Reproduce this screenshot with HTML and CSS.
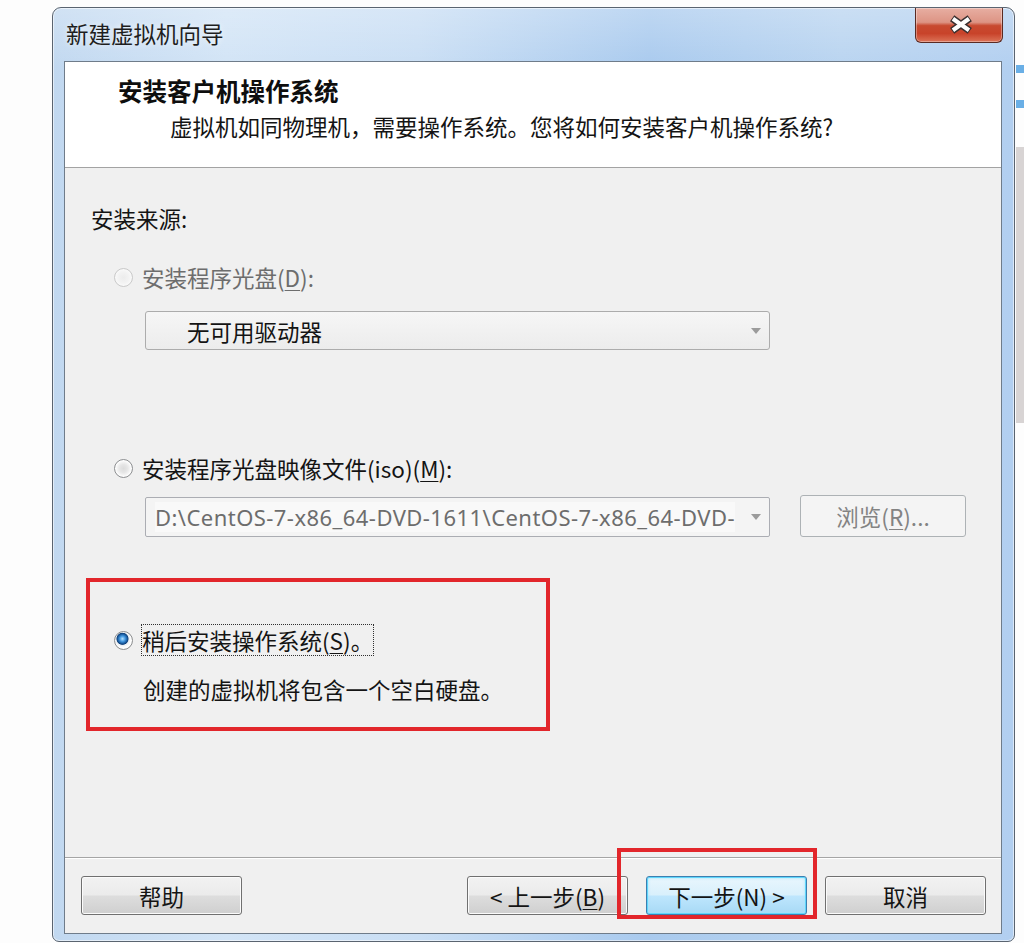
FILE: index.html
```html
<!DOCTYPE html>
<html lang="zh-CN">
<head>
<meta charset="utf-8">
<title>新建虚拟机向导</title>
<link rel="stylesheet" href="styles.css">
</head>
<body>
<div class="page">
  <div class="window">
    <div class="titlebar">
      <div class="title">新建虚拟机向导</div>
      <div class="close-btn">
        <svg width="88" height="35" viewBox="0 0 88 35">
          <path d="M37 10 L55 23 M55 10 L37 23" stroke="#3a3030" stroke-width="7.5" fill="none"/>
          <path d="M37.8 10.6 L54.2 22.4 M54.2 10.6 L37.8 22.4" stroke="#ffffff" stroke-width="4.2" fill="none"/>
        </svg>
      </div>
    </div>
    <div class="panel">
      <div class="header">
        <div class="h-title">安装客户机操作系统</div>
        <div class="h-sub">虚拟机如同物理机，需要操作系统。您将如何安装客户机操作系统?</div>
      </div>
      <div class="content">
        <div class="source-label">安装来源:</div>
        <div class="radio-row disabled">
          <span class="radio radio-disabled"></span>
          <span class="label">安装程序光盘(<u>D</u>):</span>
        </div>
        <div class="combo combo-list">
          <span class="combo-text">无可用驱动器</span>
          <span class="arrow"></span>
        </div>
        <div class="radio-row second">
          <span class="radio"></span>
          <span class="label">安装程序光盘映像文件(iso)(<u>M</u>):</span>
        </div>
        <div class="iso-row">
          <div class="combo combo-edit">
            <span class="combo-path">D:\CentOS-7-x86_64-DVD-1611\CentOS-7-x86_64-DVD-</span>
            <span class="arrow"></span>
          </div>
          <div class="btn btn-disabled">浏览(<u>R</u>)...</div>
        </div>
        <div class="highlight">
          <div class="radio-row">
            <span class="radio radio-checked"></span>
            <span class="label focus">稍后安装操作系统(<u>S</u>)。</span>
          </div>
          <div class="desc">创建的虚拟机将包含一个空白硬盘。</div>
        </div>
      </div>
      <div class="footer">
        <div class="btn help">帮助</div>
        <div class="btn">&lt; 上一步(<u>B</u>)</div>
        <div class="btn btn-default">下一步(N) &gt;</div>
        <div class="btn">取消</div>
      </div>
      <div class="annot-next"></div>
    </div>
  </div>
  <div class="side">
    <div class="mark mark-1"></div>
    <div class="mark mark-2"></div>
    <div class="side-bar"></div>
  </div>
</div>
</body>
</html>
```
FILE: styles.css
```css
* { box-sizing: border-box; }
html, body { margin: 0; padding: 0; }
body {
  width: 1024px;
  height: 943px;
  overflow: hidden;
  background: #fdfdfd;
  font-family: "Noto Sans CJK SC", "Noto Sans", sans-serif;
  color: #141414;
}
u { text-decoration-thickness: 1px; text-underline-offset: 3px; }

.page {
  display: flex;
  align-items: flex-start;
  padding: 7px 0 0 52px;
}

.window {
  width: 963px;
  height: 935px;
  border: 1px solid #5a6470;
  border-radius: 9px 9px 7px 7px;
  background:
    linear-gradient(to bottom, rgba(255,255,255,0.25), rgba(255,255,255,0) 60px),
    linear-gradient(to right, #c1d8f0 0%, #d2e4f6 18%, #c9def4 38%, #a9caee 62%, #b9d4f0 82%, #b2cff0 100%);
  box-shadow: inset 0 0 0 1px rgba(255,255,255,0.55);
  padding: 0 12px 7px 11px;
  display: flex;
  flex-direction: column;
}

.titlebar {
  height: 53px;
  display: flex;
  justify-content: space-between;
  align-items: flex-start;
}
.title {
  margin-top: 12px;
  padding-left: 2px;
  font-size: 22.5px;
  line-height: 26px;
  color: #1e1e1e;
  text-shadow: 0 0 6px rgba(255,255,255,0.8);
}
.close-btn {
  width: 88px;
  height: 35px;
  margin-right: -1px;
  border: 1px solid #5a2a22;
  border-top: none;
  border-radius: 0 0 6px 6px;
  background: linear-gradient(to bottom, #e7aea2 0%, #dd9484 42%, #c84a30 52%, #c8432a 75%, #dc7358 100%);
  box-shadow: inset 0 0 0 1px rgba(255,255,255,0.35);
  display: flex;
}

.panel {
  flex: 1;
  position: relative;
  border: 1px solid #6f7c8a;
  background: #f0f0f0;
  display: flex;
  flex-direction: column;
}

.header {
  height: 106px;
  background: #ffffff;
  border-bottom: 1px solid #a3a3a3;
  padding: 14px 0 0 53px;
}
.h-title {
  font-size: 24.5px;
  line-height: 30px;
  font-weight: 700;
  color: #0e0e0e;
}
.h-sub {
  margin-top: 5px;
  padding-left: 52px;
  font-size: 22.5px;
  line-height: 30px;
}

.content {
  flex: 1;
  padding-top: 35px;
  display: flex;
  flex-direction: column;
  align-items: flex-start;
  font-size: 22.5px;
  line-height: 30px;
}
.source-label { margin-left: 26px; }

.radio-row {
  display: flex;
  align-items: center;
  gap: 9px;
  height: 30px;
  margin-left: 49px;
  margin-top: 29px;
}
.radio-row.second { margin-top: 103px; }
.radio-row.disabled .label { color: #6d6d6d; }

.radio {
  flex: none;
  width: 19px;
  height: 19px;
  border-radius: 50%;
  border: 1px solid #8c8e90;
  background: radial-gradient(circle, #dcdcdc 0, #e6e6e6 4px, #f4f4f4 6.5px, #fdfdfd 8px);
}
.radio-disabled {
  border-color: #c9c9c9;
  background: radial-gradient(circle, #ececec 0, #f2f2f2 5px, #f8f8f8 8px);
}
.radio-checked {
  border-color: #8a8c8e;
  background: radial-gradient(circle at 44% 40%, #b8e2ff 0, #4a9ee3 2.5px, #1d62a8 4.5px, #0f4079 5.6px, #e9eef3 6.4px, #f6f6f6 7.5px, #fdfdfd 8.5px);
}

.combo {
  margin-left: 80px;
  width: 625px;
  border: 1px solid #acacac;
  border-radius: 3px;
  display: flex;
  align-items: center;
}
.combo-list {
  margin-top: 19px;
  height: 39px;
  padding-left: 41px;
  background: linear-gradient(to bottom, #f6f6f6, #ececec);
  color: #141414;
}
.arrow {
  margin-left: auto;
  margin-right: 8px;
  width: 0;
  height: 0;
  border-left: 5.5px solid transparent;
  border-right: 5.5px solid transparent;
  border-top: 6px solid #9b9b9b;
}

.iso-row {
  margin-top: 12px;
  margin-left: 80px;
  display: flex;
  align-items: flex-end;
  gap: 30px;
}
.combo-edit {
  margin-left: 0;
  height: 40px;
  padding-left: 9px;
  background: #f4f4f4;
  border-color: #abadb3;
  border-radius: 2px;
}
.combo-path {
  white-space: nowrap;
  font-family: "Noto Sans", "Open Sans", sans-serif;
  font-size: 22px;
  letter-spacing: 0.45px;
  line-height: 30px;
  color: #6d6d6d;
  background: #f9f9f9;
}

.btn {
  width: 161px;
  height: 39px;
  border: 1px solid #707070;
  border-radius: 3px;
  background: linear-gradient(to bottom, #f2f2f2 0%, #ebebeb 48%, #dddddd 52%, #cfcfcf 100%);
  box-shadow: inset 0 0 0 1px #fbfbfb;
  display: flex;
  align-items: center;
  justify-content: center;
  font-size: 22.5px;
  line-height: 30px;
  color: #141414;
  white-space: nowrap;
}
.btn-disabled {
  width: 166px;
  height: 42px;
  border-color: #adb2b5;
  background: #f4f4f4;
  box-shadow: none;
  color: #838383;
}
.btn-default {
  border-color: #3c7fb1;
  background: linear-gradient(to bottom, #e9f6fd 0%, #d9f0fc 48%, #bee6fd 52%, #a7d9f5 100%);
  box-shadow: inset 0 0 0 1px #5fd6fb, inset 0 0 3px 1px #9fe6fd;
}

.highlight {
  margin-top: 41px;
  margin-left: 21px;
  width: 464px;
  height: 153px;
  border: 4px solid #e2262b;
  padding: 43px 0 0 24px;
}
.highlight .radio-row { margin: 0; }
.focus { outline: 1px dotted #303030; }
.desc { margin-top: 19px; margin-left: 29px; }

.footer {
  height: 76px;
  border-top: 1px solid #a5a5a5;
  box-shadow: inset 0 1px 0 #ffffff;
  padding: 18px 15px 0 16px;
  display: flex;
  align-items: flex-start;
  gap: 18px;
}
.help { margin-right: auto; }

.annot-next {
  position: absolute;
  left: 552px;
  top: 786px;
  width: 200px;
  height: 71px;
  border: 4px solid #e2262b;
}

.side {
  width: 8px;
  margin-left: 1px;
  display: flex;
  flex-direction: column;
}
.mark { height: 8px; background: #6aafe6; }
.mark-1 { margin-top: 58px; }
.mark-2 { margin-top: 27px; }
.side-bar { margin-top: 39px; height: 276px; background: #d8d4d4; }
```
